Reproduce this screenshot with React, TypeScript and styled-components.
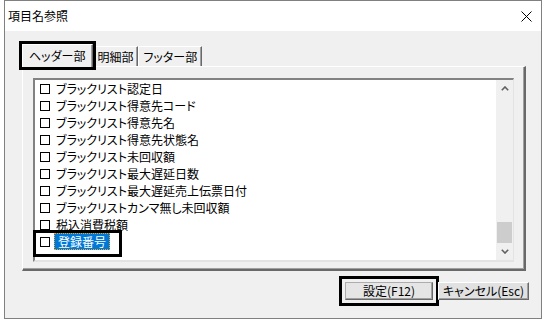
import styled, { createGlobalStyle, css } from "styled-components";

const GlobalStyle = createGlobalStyle`
  html, body {
    margin: 0;
    padding: 0;
    background: #ffffff;
  }
  body {
    font-family: "Noto Sans CJK JP", "Liberation Sans", sans-serif;
    font-size: 12px;
    font-feature-settings: "palt";
    color: #000;
  }
`;

const Page = styled.div`
  padding: 0 5px 4px 4px;
`;

const Window = styled.div`
  width: 536px;
  height: 317px;
  border: 1px solid #808080;
  display: flex;
  flex-direction: column;
`;

const TitleBar = styled.div`
  height: 30px;
  background: #ffffff;
  display: flex;
  align-items: center;
  justify-content: space-between;
  padding: 0 9px 0 3px;
`;

const Title = styled.span`
  font-size: 12px;
  line-height: 14px;
  margin-top: -1px;
`;

const Body = styled.div`
  flex: 1;
  background: #f0f0f0;
  padding: 11px 12px 18px 17px;
  display: flex;
  flex-direction: column;
`;

const TabStrip = styled.div`
  display: flex;
  align-items: flex-end;
  height: 24px;
  padding-left: 2px;
`;

const Tab = styled.div<{ $active?: boolean; $marked?: boolean }>`
  position: relative;
  height: 19px;
  line-height: 19px;
  padding: 0 4px 0 4px;
  background: #f0f0f0;
  border-top: 1px solid #ffffff;
  border-left: 1px solid #ffffff;
  border-right: 1px solid #696969;
  box-shadow: inset -1px 0 0 #a0a0a0;
  white-space: nowrap;
  ${(p) =>
    p.$active &&
    css`
      height: 22px;
      line-height: 21px;
      padding: 0 7px 0 6px;
      margin: 0 -1px -1px -2px;
      z-index: 2;
    `}
  ${(p) =>
    p.$marked &&
    css`
      outline: 3px solid #000;
      outline-offset: 0;
    `}
`;

const TabPage = styled.div`
  width: 501px;
  height: 202px;
  border-top: 1px solid #ffffff;
  border-left: 1px solid #ffffff;
  border-right: 2px solid #696969;
  border-bottom: 2px solid #696969;
  box-shadow: inset -1px -1px 0 #a0a0a0;
  padding: 11px 10px 7px 10px;
  box-sizing: border-box;
  width: 504px;
  height: 205px;
  display: flex;
`;

const ListBox = styled.div`
  flex: 1;
  display: flex;
  background: #ffffff;
  border-top: 2px solid #828282;
  border-left: 2px solid #828282;
  border-right: 1px solid #e3e3e3;
  border-bottom: 2px solid #e3e3e3;
`;

const Items = styled.div`
  flex: 1;
  display: flex;
  flex-direction: column;
`;

const Row = styled.div<{ $marked?: boolean }>`
  position: relative;
  height: 17px;
  display: flex;
  align-items: center;
  gap: 4px;
  padding-left: 5px;
  white-space: nowrap;
  ${(p) =>
    p.$marked &&
    css`
      width: fit-content;
      padding-right: 12px;
      &::after {
        content: "";
        position: absolute;
        top: -3px;
        bottom: -7px;
        left: -2px;
        right: 0;
        border: 3px solid #000;
        z-index: 3;
      }
    `}
`;

const CheckBox = styled.span`
  width: 8px;
  height: 8px;
  border: 1px solid #000;
  background: #fff;
  flex: none;
`;

const Label = styled.span<{ $selected?: boolean }>`
  line-height: 15px;
  padding: 0 1px;
  border: 1px solid transparent;
  ${(p) =>
    p.$selected &&
    css`
      background: #0078d7;
      color: #ffffff;
      padding: 0 3px;
      border: 1px dotted #f5a623;
    `}
`;

const ScrollBar = styled.div`
  width: 17px;
  display: flex;
  flex-direction: column;
  background: #f0f0f0;
`;

const ArrowButton = styled.div`
  height: 17px;
  display: flex;
  align-items: center;
  justify-content: center;
`;

const Track = styled.div`
  flex: 1;
  display: flex;
  flex-direction: column;
  justify-content: flex-end;
`;

const Thumb = styled.div`
  height: 21px;
  margin: 0 1px;
  background: #cdcdcd;
`;

const Footer = styled.div`
  margin-top: 11px;
  display: flex;
  justify-content: flex-end;
  gap: 5px;
`;

const Button = styled.button<{ $marked?: boolean; $wide?: boolean }>`
  width: ${(p) => (p.$wide ? "91px" : "88px")};
  height: 18px;
  padding: 0;
  margin: 0;
  font-family: "Noto Sans CJK JP", "Liberation Sans", sans-serif;
  font-feature-settings: "palt";
  font-size: 12px;
  line-height: 16px;
  color: #000;
  background: #e1e1e1;
  border: none;
  border-top: 1px solid #ffffff;
  border-left: 1px solid #ffffff;
  border-right: 1px solid #696969;
  border-bottom: 1px solid #696969;
  box-shadow: inset -1px -1px 0 #a0a0a0;
  ${(p) =>
    p.$marked &&
    css`
      background: #e5e5e5;
      border: 1px solid #adadad;
      border-right-color: #696969;
      border-bottom-color: #696969;
      outline: 3px solid #000;
      outline-offset: 3px;
    `}
`;

const items = [
  "ブラックリスト認定日",
  "ブラックリスト得意先コード",
  "ブラックリスト得意先名",
  "ブラックリスト得意先状態名",
  "ブラックリスト未回収額",
  "ブラックリスト最大遅延日数",
  "ブラックリスト最大遅延売上伝票日付",
  "ブラックリストカンマ無し未回収額",
  "税込消費税額",
  "登録番号",
];

function CloseIcon() {
  return (
    <svg width="11" height="11" viewBox="0 0 11 11">
      <path d="M0.5 0.5 L10.5 10.5 M10.5 0.5 L0.5 10.5" stroke="#000" strokeWidth="1" />
    </svg>
  );
}

function Chevron({ down }: { down?: boolean }) {
  return (
    <svg width="8" height="5" viewBox="0 0 8 5">
      <path
        d={down ? "M0.8 0.8 L4 4 L7.2 0.8" : "M0.8 4.2 L4 1 L7.2 4.2"}
        fill="none"
        stroke="#606060"
        strokeWidth="1.6"
      />
    </svg>
  );
}

export default function App() {
  return (
    <>
      <GlobalStyle />
      <Page>
        <Window>
          <TitleBar>
            <Title>項目名参照</Title>
            <CloseIcon />
          </TitleBar>
          <Body>
            <TabStrip>
              <Tab $active $marked>ヘッダー部</Tab>
              <Tab>明細部</Tab>
              <Tab>フッター部</Tab>
            </TabStrip>
            <TabPage>
              <ListBox>
                <Items>
                  {items.map((name, i) => {
                    const last = i === items.length - 1;
                    return (
                      <Row key={name} $marked={last}>
                        <CheckBox />
                        <Label $selected={last}>{name}</Label>
                      </Row>
                    );
                  })}
                </Items>
                <ScrollBar>
                  <ArrowButton>
                    <Chevron />
                  </ArrowButton>
                  <Track>
                    <Thumb />
                  </Track>
                  <ArrowButton>
                    <Chevron down />
                  </ArrowButton>
                </ScrollBar>
              </ListBox>
            </TabPage>
            <Footer>
              <Button $marked>設定(F12)</Button>
              <Button $wide>キャンセル(Esc)</Button>
            </Footer>
          </Body>
        </Window>
      </Page>
    </>
  );
}
